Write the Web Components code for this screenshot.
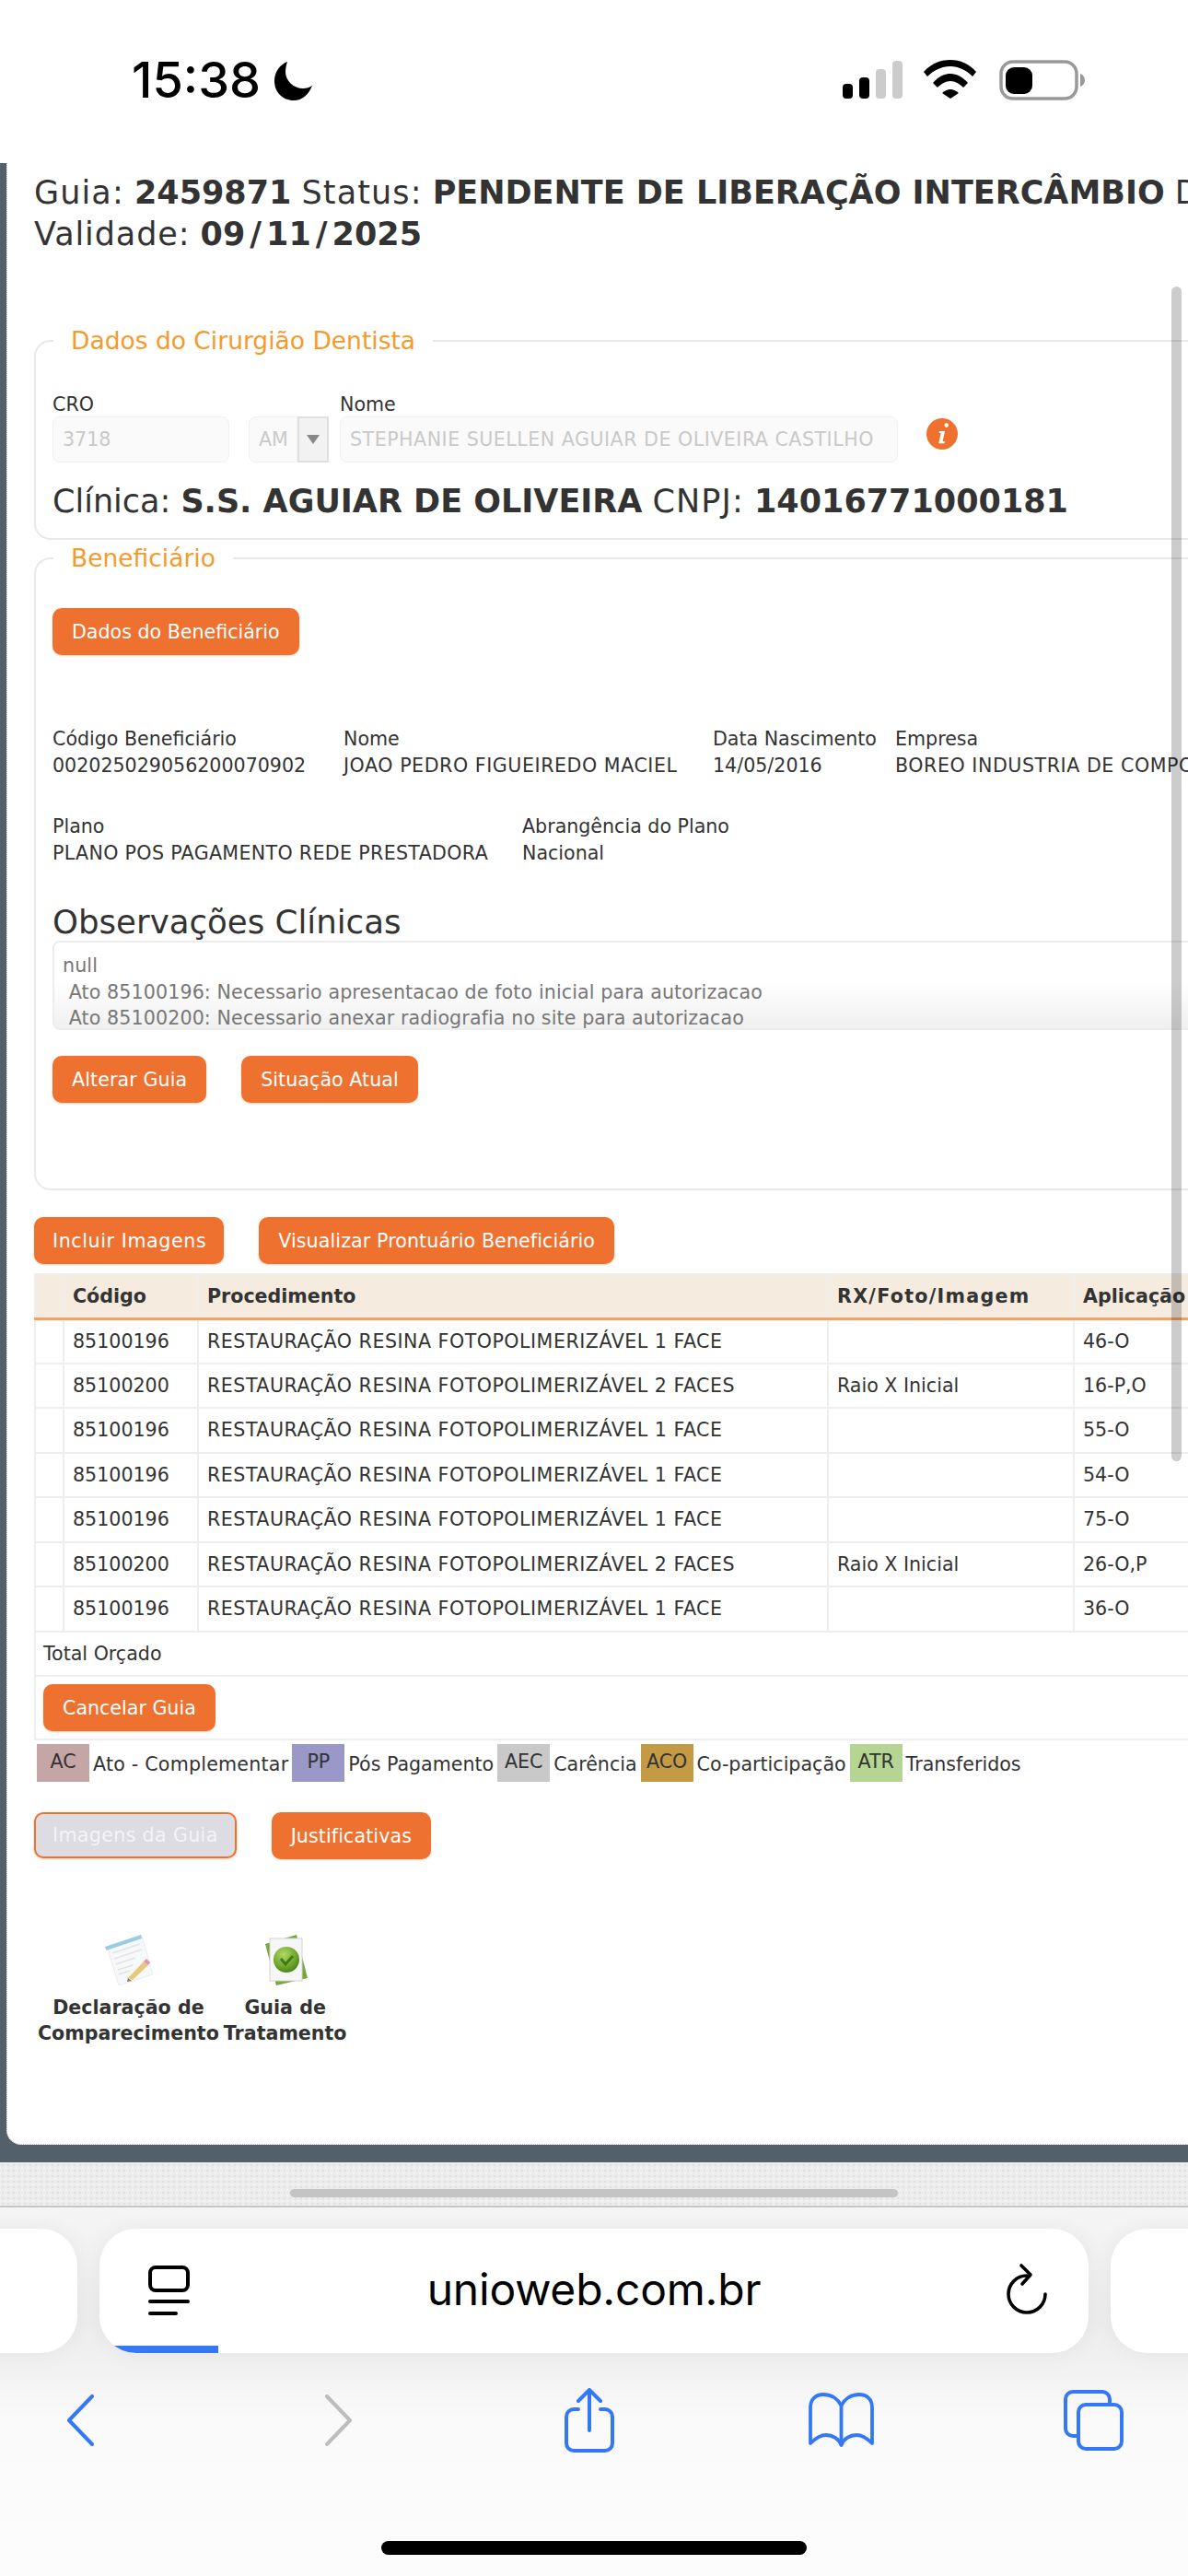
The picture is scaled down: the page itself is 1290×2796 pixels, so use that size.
<!DOCTYPE html>
<html lang="pt-BR"><head><meta charset="utf-8"><title>Guia</title>
<style>
html,body{margin:0;padding:0;height:2796px;overflow:hidden;background:#fff;font-family:"DejaVu Sans",sans-serif;font-size:20.6px;color:#333}
body{display:flex;flex-direction:column;width:1290px}
</style></head><body>
<ios-status></ios-status>
<page-frame>
  <guia-header></guia-header>
  <ui-fieldset style="margin-top:78px"><span slot="legend">Dados do Cirurgião Dentista</span><dentist-form></dentist-form></ui-fieldset>
  <ui-fieldset style="margin-top:5px"><span slot="legend">Beneficiário</span><benef-panel></benef-panel></ui-fieldset>
  <btn-row style="margin-top:29px"><ui-btn style="letter-spacing:.6px;padding:0 19px 0 20px">Incluir Imagens</ui-btn><ui-btn style="letter-spacing:.1px">Visualizar Prontuário Beneficiário</ui-btn></btn-row>
  <proc-table></proc-table>
  <status-legend></status-legend>
  <btn-row style="margin-top:33px"><ui-btn muted style="letter-spacing:.35px;padding:0 18px">Imagens da Guia</ui-btn><ui-btn style="letter-spacing:.1px">Justificativas</ui-btn></btn-row>
  <doc-links></doc-links>
</page-frame>
<safari-bar></safari-bar>
<script>
function def(name,html){
  customElements.define(name,class extends HTMLElement{
    constructor(){super();this.attachShadow({mode:'open'}).innerHTML=html;}
  });
}
def('ios-status',`<style>
:host{display:flex;flex:none;height:177px;background:#fff;color:#000;box-sizing:border-box;padding:65px 0 0 143px;font-family:Inter,"Liberation Sans",sans-serif}
.t{font-size:54px;font-weight:500;line-height:44px;letter-spacing:0;width:155px;white-space:nowrap}
svg{display:block;flex:none}
.moon{margin-top:2px}.sig{margin-left:576px;margin-top:1px}.wifi{margin-left:22px}.bat{margin-left:24px}
</style>
<div class="t">15:38</div>
<svg class="moon" width="41" height="42" viewBox="0 0 41 42"><path d="M14 0C6 3 0 11 0 21C0 33 9 42 21 42C30 42 37 36 41 26C38 28 35 29 31 29C21 29 12 21 12 11C12 7 13 3 14 0Z"/></svg>
<svg class="sig" width="65" height="41" viewBox="0 0 65 41"><rect y="25" width="11" height="16" rx="4"/><rect x="18" y="18" width="11" height="23" rx="4"/><rect x="36" y="9" width="11" height="32" rx="4" fill="#ccc"/><rect x="54" width="11" height="41" rx="4" fill="#ccc"/></svg>
<svg class="wifi" width="59" height="42" viewBox="0 0 59 42"><path d="M1 13C9 4 19 0 30 0C41 0 50 4 58 13L54 18C47 11 39 7 30 7C21 7 12 11 5 18Z"/><path d="M11 25C16 19 23 15 30 15C37 15 44 19 49 25L44 30C40 26 35 23 30 23C25 23 20 26 16 30Z"/><path d="M21 36Q30 28 39 36L30 42Z"/></svg>
<svg class="bat" width="93" height="44" viewBox="0 0 93 44"><rect x="2" y="2" width="82" height="40" rx="13" fill="none" stroke="#999" stroke-width="3.5"/><rect x="7" y="8" width="29" height="29" rx="9"/><path d="M88 15C91 16 93 19 93 22C93 25 91 28 88 29Z" fill="#999"/></svg>`);

def('page-frame',`<style>
:host{display:flex;flex:none;height:2170px;background:#51606b;box-sizing:border-box;padding:0 0 19px 7px;position:relative;overflow:hidden}
.panel{flex:1;background:#fff;border-bottom-left-radius:16px;border-left:1px dotted #b9c0c5;border-bottom:1px dotted #b9c0c5;box-sizing:border-box;padding:10px 0 0 29px;overflow:hidden;min-width:0}
.in{width:1500px}
.sb{position:absolute;left:1272px;top:134px;width:11px;height:1275px;border-radius:6px;background:rgba(0,0,0,.2)}
</style><div class="panel"><div class="in"><slot></slot></div></div><div class="sb"></div>`);

def('guia-header',`<style>
:host{display:block;font-size:35px;line-height:45px;white-space:nowrap;color:#333}
b{font-weight:700}
span{letter-spacing:1.1px}
i{font-style:normal;padding:0 5px}
</style><div><span>Guia:</span> <b>2459871</b> <span>Status:</span> <b>PENDENTE DE LIBERAÇÃO INTERCÂMBIO</b> <span>D</span></div><div><span style="letter-spacing:.9px">Validade:</span> <b>09<i>/</i>11<i>/</i>2025</b></div>`);

def('ui-fieldset',`<style>
:host{display:block}
fieldset{margin:0;border:2px solid #e9e9e9;border-radius:18px;padding:0 0 0 18px;min-width:0}
legend{margin-left:1px;padding:0 19px;font-size:26.5px;line-height:30px;color:#f59a2c}
</style><fieldset><legend><slot name="legend"></slot></legend><slot></slot></fieldset>`);

def('ui-btn',`<style>
:host{display:inline-flex;align-items:center;height:51px;padding:0 21px;box-sizing:border-box;background:#ee7130;color:#fff;border-radius:10px;font-size:20.6px;white-space:nowrap;box-shadow:0 1px 2px rgba(238,113,48,.35)}
:host([muted]){background:#dcdce2;color:#f4f4f6;border:2px solid #ee7130;padding:0 19px;height:50px;box-shadow:0 1px 3px rgba(238,113,48,.3)}
</style><slot></slot>`);

def('btn-row',`<style>:host{display:flex;gap:38px;align-items:flex-start}</style><slot></slot>`);

def('dentist-form',`<style>
:host{display:block;padding:42px 0 17px;color:#333}
.row{display:flex;align-items:flex-start}
label{display:block;line-height:25px;font-size:20.6px;height:25px}
.inp{height:50px;box-sizing:border-box;background:#fafafa;border:1px solid #f1f1f1;border-radius:8px;color:#c9c9c9;font-size:20.6px;line-height:48px;padding:0 10px;white-space:nowrap}
.sel{width:34px;height:50px;box-sizing:border-box;border:2px solid #dfdfdf;background:#f2f2f2;display:flex;align-items:center;justify-content:center}
.sel i{display:block;width:0;height:0;border:7px solid transparent;border-top:10px solid #888;border-bottom:0}
svg{display:block;flex:none}
.c{font-size:35px;line-height:45px;margin-top:20px;white-space:nowrap}
b{font-weight:700}
.cn{letter-spacing:1.1px}
</style>
<div class="row">
  <div style="width:192px;margin-right:21px"><label>CRO</label><div class="inp">3718</div></div>
  <div style="margin-right:12px"><label>&nbsp;</label><div class="row"><div class="inp" style="width:53px;padding:0 0 0 10px;border-radius:8px 0 0 8px;">AM</div><div class="sel"><i></i></div></div></div>
  <div style="width:606px"><label>Nome</label><div class="inp" style="letter-spacing:.5px">STEPHANIE SUELLEN AGUIAR DE OLIVEIRA CASTILHO</div></div>
  <svg width="34" height="34" viewBox="0 0 34 34" style="margin-top:27px;margin-left:31px"><circle cx="17" cy="17" r="17" fill="#ee7130"/><path d="M19.5 7.5a2.2 2.2 0 1 1 0 .01ZM14 14h6l-2.4 11H20l-.5 2.2h-6.2L15.7 16H13.6Z" fill="#fff"/></svg>
</div>
<div class="c">Clínica: <b>S.S. AGUIAR DE OLIVEIRA</b> <span class="cn">CNPJ:</span> <b>14016771000181</b></div>`);

def('benef-panel',`<style>
:host{display:block;padding:39px 0 93px;color:#333}
.d{display:flex;white-space:nowrap;line-height:28.5px;font-size:20.6px}
.d div{flex:none}
.up{letter-spacing:.55px}
h2{font-weight:400;font-size:35.6px;line-height:40px;margin:41px 0 0;color:#333}
.obs{width:1400px;height:97px;box-sizing:border-box;border:2px solid #ededed;border-radius:8px;padding:11px 9px 0;color:#777;font-size:20.6px;line-height:28.5px;letter-spacing:.12px;white-space:pre;overflow:hidden;background:linear-gradient(#fff 45%,#f0f0f0 100%)}
.b{display:flex;gap:38px;margin-top:28px}
</style>
<ui-btn>Dados do Beneficiário</ui-btn>
<div class="d" style="margin-top:77px">
 <div style="width:316px">Código Beneficiário<br>002025029056200070902</div>
 <div style="width:401px">Nome<br><span class="up">JOAO PEDRO FIGUEIREDO MACIEL</span></div>
 <div style="width:198px">Data Nascimento<br>14/05/2016</div>
 <div>Empresa<br><span class="up">BOREO INDUSTRIA DE COMPO</span></div>
</div>
<div class="d" style="margin-top:38px">
 <div style="width:510px">Plano<br><span style="letter-spacing:.33px">PLANO POS PAGAMENTO REDE PRESTADORA</span></div>
 <div>Abrangência do Plano<br>Nacional</div>
</div>
<h2>Observações Clínicas</h2>
<div class="obs">null
 Ato 85100196: Necessario apresentacao de foto inicial para autorizacao
 Ato 85100200: Necessario anexar radiografia no site para autorizacao</div>
<div class="b"><ui-btn style="letter-spacing:.1px">Alterar Guia</ui-btn><ui-btn style="letter-spacing:.05px">Situação Atual</ui-btn></div>`);

const rows=[['85100196','1 FACE','','46-O'],['85100200','2 FACES','Raio X Inicial','16-P,O'],['85100196','1 FACE','','55-O'],['85100196','1 FACE','','54-O'],['85100196','1 FACE','','75-O'],['85100200','2 FACES','Raio X Inicial','26-O,P'],['85100196','1 FACE','','36-O']];
def('proc-table',`<style>
:host{display:block;margin-top:10px;width:1400px}
table{border-collapse:collapse;table-layout:fixed;width:1400px;font-size:20.6px;color:#333}
th,td{border:2px solid #eeeeee;padding:0 9px;text-align:left;white-space:nowrap;height:48.5px;box-sizing:border-box}
th{background:#f5ecdf;font-weight:700;border-bottom:3px solid #f4a063;height:48px}
td.p{letter-spacing:.5px}
td.f{padding:0 8px}
td.btn{height:69px;padding:0 8px}
</style><table>
<colgroup><col style="width:31px"><col style="width:146px"><col style="width:684px"><col style="width:267px"><col></colgroup>
<thead><tr><th></th><th>Código</th><th>Procedimento</th><th style="letter-spacing:1.3px">RX/Foto/Imagem</th><th>Aplicação</th></tr></thead>
<tbody>${rows.map(r=>`<tr><td></td><td>${r[0]}</td><td class="p">RESTAURAÇÃO RESINA FOTOPOLIMERIZÁVEL ${r[1]}</td><td>${r[2]}</td><td>${r[3]}</td></tr>`).join('')}
<tr><td class="f" colspan="5">Total Orçado</td></tr>
<tr><td class="btn" colspan="5"><ui-btn>Cancelar Guia</ui-btn></td></tr></tbody></table>`);

def('l-chip',`<style>
:host{display:flex;align-items:center;justify-content:center;width:57px;height:41px;flex:none;font-size:20.6px;padding-bottom:3px;box-sizing:border-box;color:#333}
</style><slot></slot>`);
def('status-legend',`<style>
:host{display:flex;align-items:flex-start;margin:4px 0 0 3px;font-size:20.6px;white-space:nowrap;color:#333}
span{line-height:41px;padding:2px 4px 0 4px;height:39px}
</style>
<l-chip style="background:#c4a6a6">AC</l-chip><span style="letter-spacing:.22px">Ato - Complementar</span>
<l-chip style="background:#9a98c8">PP</l-chip><span>Pós Pagamento</span>
<l-chip style="background:#c9c9c9">AEC</l-chip><span>Carência</span>
<l-chip style="background:#c49a45">ACO</l-chip><span>Co-participação</span>
<l-chip style="background:#b5d692">ATR</l-chip><span>Transferidos</span>`);

def('doc-links',`<style>
:host{display:flex;gap:5px;margin:81px 0 0 4px;font-size:20.6px;font-weight:700;line-height:28px;color:#333;text-align:center}
.i{display:flex;flex-direction:column;align-items:center}
svg{display:block;margin-bottom:10px}
</style>
<div class="i"><svg width="56" height="56" viewBox="0 0 56 56">
 <defs><filter id="s"><feGaussianBlur stdDeviation=".6"/></filter></defs>
 <g filter="url(#s)"><path d="M5 14L43 2L55 44L18 56Z" fill="#f7f8f9" stroke="#e9ebee"/>
 <path d="M3 14L42 1L43 5L4.500 18Z" fill="#9accE4"/>
 <g stroke="#e3e3e3" stroke-width="1.500"><path d="M11 21L41 11M13 27L43 17M15 33L36 26M17 39L33 34M18 44L30 40"/></g>
 <path d="M28 48L45 30L50 34L33 50Z" fill="#e8c87a"/><path d="M45 30L48 27L52 31L50 34Z" fill="#dc94ae"/><path d="M28 48L27 52L32 51Z" fill="#8a7c60"/></g></svg>
<div>Declaração de<br>Comparecimento</div></div>
<div class="i"><svg width="56" height="56" viewBox="0 0 56 56" style="margin-bottom:10px">
 <defs><radialGradient id="g" cx=".4" cy=".3" r=".8"><stop offset="0" stop-color="#b3d866"/><stop offset=".6" stop-color="#6da62c"/><stop offset="1" stop-color="#3d7a18"/></radialGradient><filter id="t"><feGaussianBlur stdDeviation=".4"/></filter></defs>
 <g filter="url(#t)"><path d="M6 11L40 1L52 48L18 56Z" fill="#78a83e"/>
 <rect x="11" y="5" width="35" height="46" fill="#f6f6f6" stroke="#d4d4d4"/>
 <circle cx="29" cy="28" r="14" fill="url(#g)"/><path d="M23 27L28 33L36 24" fill="none" stroke="#3f7a1c" stroke-width="3"/></g></svg>
<div>Guia de<br>Tratamento</div></div>`);

def('safari-bar',`<style>
:host{display:flex;flex-direction:column;flex:1;min-height:0;color:#000;font-family:Inter,"Liberation Sans",sans-serif;overflow:hidden}
.tex{flex:none;height:47px;box-sizing:border-box;background-color:#ececec;background-image:radial-gradient(#e0e0e0 1px,transparent 1.2px),radial-gradient(#f4f4f4 1px,transparent 1.2px);background-size:6px 6px;background-position:0 0,3px 3px;display:flex;justify-content:center;padding-top:29px}
.pill{width:660px;height:9px;border-radius:5px;background:#c4c4c4}
.bar{flex:1;border-top:2px solid #c6c6c6;background:linear-gradient(#f5f5f5 0,#ededed 120px,#f0f0f0 165px,#fafafa 230px,#fcfcfc 100%);display:flex;flex-direction:column;align-items:center}
.tabs{display:flex;gap:24px;justify-content:center;width:100%;margin-top:23px;flex:none}
.card{flex:none;width:300px;height:135px;border-radius:40px;background:#fff;box-shadow:0 0 24px rgba(0,0,0,.05)}
.main{flex:none;width:1074px;height:135px;border-radius:40px;background:#fff;position:relative;overflow:hidden;display:grid;grid-template-columns:1fr auto 1fr;align-items:center;box-shadow:0 0 24px rgba(0,0,0,.05)}
.u{font-size:48px;line-height:60px;letter-spacing:-.2px;white-space:nowrap;margin-top:-3px}
.tab-ic{justify-self:start;margin-left:53px}
.rel{justify-self:end;margin-right:44px;margin-top:-5px}
.prog{position:absolute;left:0;bottom:0;width:129px;height:8px;background:#3478f6}
.nav{display:flex;align-items:center;height:70px;margin-top:38px;width:100%;box-sizing:border-box;padding-left:72px;flex:none}
svg{display:block;flex:none}
.home{width:462px;height:15px;border-radius:8px;background:#000;margin-top:96px;flex:none}
</style>
<div class="tex"><div class="pill"></div></div>
<div class="bar">
 <div class="tabs"><div class="card"></div>
  <div class="main">
   <svg class="tab-ic" width="45" height="56" viewBox="0 0 45 56"><rect x="2" y="2" width="41" height="25" rx="6" fill="none" stroke="#000" stroke-width="4"/><rect y="37" width="45" height="4" rx="2"/><rect y="50" width="32" height="4" rx="2"/></svg>
   <div class="u">unioweb.com.br</div>
   <svg class="rel" width="46" height="56" viewBox="0 0 46 56" fill="none" stroke="#000" stroke-width="3.600" stroke-linecap="round" stroke-linejoin="round"><path d="M43 34A20 20 0 1 1 23 14"/><path d="M17 3L27 13L18 23"/></svg>
   <div class="prog"></div>
  </div>
  <div class="card"></div></div>
 <div class="nav" style="color:#3478f6">
  <svg width="30" height="56" viewBox="0 0 30 56" fill="none" stroke="#3478f6" stroke-width="4" stroke-linecap="round" stroke-linejoin="round"><path d="M28 2L3 28L28 54"/></svg>
  <svg style="margin-left:251px" width="30" height="56" viewBox="0 0 30 56" fill="none" stroke="#bdbdbd" stroke-width="4" stroke-linecap="round" stroke-linejoin="round"><path d="M2 2L27 28L2 54"/></svg>
  <svg style="margin-left:230px" width="54" height="70" viewBox="0 0 54 70" fill="none" stroke="#3478f6" stroke-width="4" stroke-linecap="round" stroke-linejoin="round"><path d="M15 23H10A8 8 0 0 0 2 31V60A8 8 0 0 0 10 68H44A8 8 0 0 0 52 60V31A8 8 0 0 0 44 23H39"/><path d="M27 46V2M15 14L27 2L39 14"/></svg>
  <svg style="margin-left:211px" width="71" height="60" viewBox="0 0 71 60" fill="none" stroke="#3478f6" stroke-width="3.800" stroke-linejoin="round"><path d="M2 55V16C2 7 8 2 16 2C25 2 32 7 35.500 14C39 7 46 2 55 2C63 2 69 7 69 16V55C63 49 57 46 52 46C45 46 38 50 35.500 57C33 50 26 46 19 46C14 46 8 49 2 55Z"/><path d="M35.500 14V57"/></svg>
  <svg style="margin-left:206px" width="65" height="66" viewBox="0 0 65 66" fill="none" stroke="#3478f6" stroke-width="4" stroke-linejoin="round"><path d="M16 50H10A8 8 0 0 1 2 42V10A8 8 0 0 1 10 2H42A8 8 0 0 1 50 10V16"/><rect x="16" y="16" width="47" height="48" rx="8"/></svg>
 </div>
 <div class="home"></div>
</div>`);
</script>
</body></html>
